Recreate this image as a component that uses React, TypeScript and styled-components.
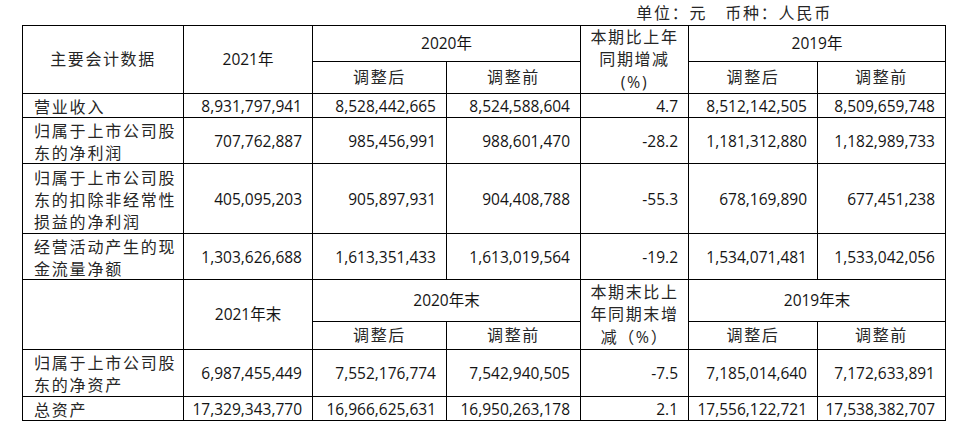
import styled, { createGlobalStyle } from 'styled-components';

type Align = 'left' | 'center' | 'right';

interface HeadDef {
  text: string[];
  rows?: number;
  cols?: number;
  latin?: boolean;
}

const HEAD_FIRST: HeadDef[] = [
  { text: ['主要会计数据'], rows: 2 },
  { text: ['2021年'], rows: 2, latin: true },
  { text: ['2020年'], cols: 2, latin: true },
  { text: ['本期比上年', '同期增减', '(%)'], rows: 2 },
  { text: ['2019年'], cols: 2, latin: true },
  { text: ['调整后'] },
  { text: ['调整前'] },
  { text: ['调整后'] },
  { text: ['调整前'] },
];

const HEAD_SECOND: HeadDef[] = [
  { text: [''], rows: 2 },
  { text: ['2021年末'], rows: 2, latin: true },
  { text: ['2020年末'], cols: 2, latin: true },
  { text: ['本期末比上', '年同期末增', '减（%）'], rows: 2 },
  { text: ['2019年末'], cols: 2, latin: true },
  { text: ['调整后'] },
  { text: ['调整前'] },
  { text: ['调整后'] },
  { text: ['调整前'] },
];

const INCOME_ROWS = [
  {
    label: ['营业收入'],
    values: ['8,931,797,941', '8,528,442,665', '8,524,588,604', '4.7', '8,512,142,505', '8,509,659,748'],
  },
  {
    label: ['归属于上市公司股', '东的净利润'],
    values: ['707,762,887', '985,456,991', '988,601,470', '-28.2', '1,181,312,880', '1,182,989,733'],
  },
  {
    label: ['归属于上市公司股', '东的扣除非经常性', '损益的净利润'],
    values: ['405,095,203', '905,897,931', '904,408,788', '-55.3', '678,169,890', '677,451,238'],
  },
  {
    label: ['经营活动产生的现', '金流量净额'],
    values: ['1,303,626,688', '1,613,351,433', '1,613,019,564', '-19.2', '1,534,071,481', '1,533,042,056'],
  },
];

const BALANCE_ROWS = [
  {
    label: ['归属于上市公司股', '东的净资产'],
    values: ['6,987,455,449', '7,552,176,774', '7,542,940,505', '-7.5', '7,185,014,640', '7,172,633,891'],
  },
  {
    label: ['总资产'],
    values: ['17,329,343,770', '16,966,625,631', '16,950,263,178', '2.1', '17,556,122,721', '17,538,382,707'],
  },
];

const Lines = ({ lines }: { lines: string[] }) => (
  <span>
    {lines.map((line, idx) => (
      <span key={line + idx.toString()}>
        {idx > 0 && <br />}
        {line}
      </span>
    ))}
  </span>
);

const renderHead = (defs: HeadDef[], prefix: string) =>
  defs.map((def, idx) => (
    <HeadCell key={prefix + idx.toString()} $rows={def.rows} $cols={def.cols} $latin={def.latin}>
      <Lines lines={def.text} />
    </HeadCell>
  ));

const renderBody = (rows: typeof INCOME_ROWS, prefix: string) =>
  rows.map((row, idx) => [
    <LabelCell key={prefix + 'l' + idx.toString()}>
      <Lines lines={row.label} />
    </LabelCell>,
    ...row.values.map((value, vIdx) => (
      <NumCell key={prefix + idx.toString() + '-' + vIdx.toString()}>{value}</NumCell>
    )),
  ]);

const App = () => {
  return (
    <>
      <GlobalStyle />
      <Page>
        <Caption>单位：元　币种：人民币</Caption>
        <Sheet>
          {renderHead(HEAD_FIRST, 'h1-')}
          {renderBody(INCOME_ROWS, 'b1-')}
          {renderHead(HEAD_SECOND, 'h2-')}
          {renderBody(BALANCE_ROWS, 'b2-')}
        </Sheet>
      </Page>
    </>
  );
};

export default App;

const GlobalStyle = createGlobalStyle`
  html, body {
    margin: 0;
    padding: 0;
    background: #ffffff;
  }
  body {
    font-family: "Open Sans", "Noto Sans CJK SC", sans-serif;
    color: #262626;
  }
`;

const Page = styled.div`
  width: 953px;
  height: 429px;
  padding-left: 22px;
  box-sizing: border-box;
`;

const Caption = styled.div`
  display: flex;
  justify-content: flex-end;
  height: 25px;
  padding-right: 121px;
  align-items: center;

  font-family: "Noto Sans CJK SC", sans-serif;
  font-size: 16px;
  letter-spacing: 1.8px;
  line-height: 25px;
`;

const Sheet = styled.div`
  display: grid;
  grid-template-columns: 160px 128px 133px 133px 107px 128px 127px;
  grid-template-rows: 35px 31px 23px 45px 69px 45px 41px 27px 46px 23px;
  gap: 1px;
  width: fit-content;

  background: #000000;
  border: 1px solid #000000;
`;

const BaseCell = styled.div<{ $align: Align }>`
  display: flex;
  align-items: center;
  justify-content: ${({ $align }) =>
    $align === 'left' ? 'flex-start' : $align === 'right' ? 'flex-end' : 'center'};
  overflow: hidden;

  background: #ffffff;
  white-space: nowrap;
`;

const HeadCell = styled(BaseCell).attrs({ $align: 'center' as Align })<{
  $rows?: number;
  $cols?: number;
  $latin?: boolean;
}>`
  grid-row: span ${({ $rows }) => $rows ?? 1};
  grid-column: span ${({ $cols }) => $cols ?? 1};

  text-align: center;
  color: ${({ $latin }) => ($latin ? '#141414' : '#262626')};
  font-size: ${({ $latin }) => ($latin ? '15.5px' : '16px')};
  letter-spacing: ${({ $latin }) => ($latin ? '0' : '1.6px')};
  line-height: 22.5px;
`;

const LabelCell = styled(BaseCell).attrs({ $align: 'left' as Align })`
  padding-left: 11px;

  font-family: "Noto Sans CJK SC", sans-serif;
  font-size: 16px;
  letter-spacing: 1.8px;
  line-height: 22px;
`;

const NumCell = styled(BaseCell).attrs({ $align: 'right' as Align })`
  padding-right: 10px;

  color: #141414;
  font-size: 15.5px;
  line-height: 22px;
`;
